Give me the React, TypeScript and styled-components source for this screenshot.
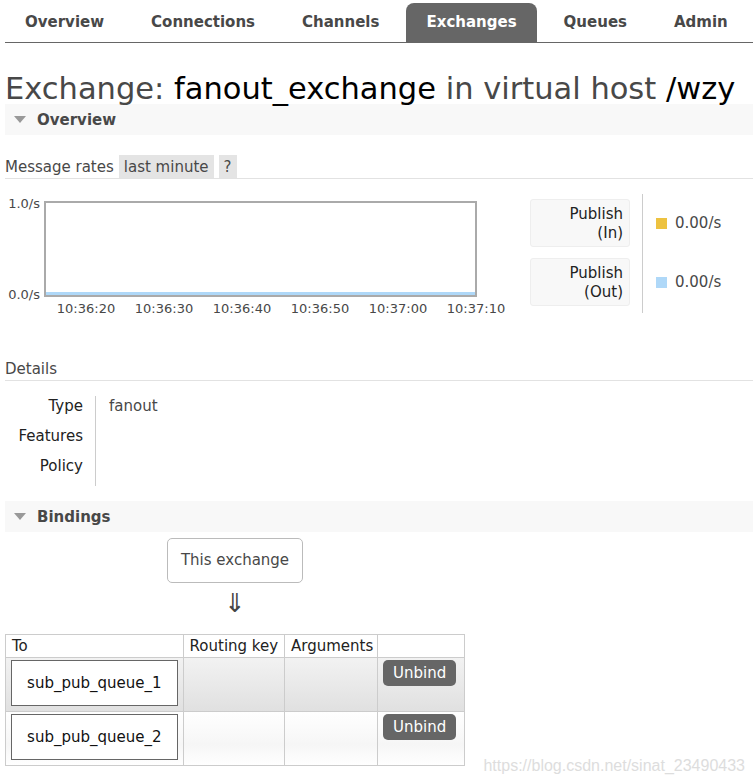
import React from "react";
import styled, { createGlobalStyle } from "styled-components";

const GlobalStyle = createGlobalStyle`
  body {
    margin: 0;
    background: #fff;
    color: #484848;
    font-family: "DejaVu Sans", Verdana, sans-serif;
    font-size: 15px;
  }
`;

const Page = styled.div`
  position: relative;
  padding-left: 5px;
  height: 783px;
  overflow: hidden;
`;

const Nav = styled.ul`
  display: flex;
  list-style: none;
  margin: 0;
  padding: 3px 0 0 0;
  border-bottom: 1px solid #666;
`;

const Tab = styled.li<{ $active?: boolean }>`
  height: 39px;
  line-height: 39px;
  padding: 0 20px;
  margin-right: 7px;
  border-radius: 8px 8px 0 0;
  font-weight: bold;
  font-size: 15px;
  color: ${(p) => (p.$active ? "#fff" : "#484848")};
  background: ${(p) => (p.$active ? "#666" : "transparent")};
`;

const Title = styled.h1`
  margin: 30px 0 0 0;
  font-size: 30.5px;
  line-height: 31px;
  font-weight: normal;
  color: #484848;
  white-space: nowrap;
`;

const Strong = styled.span`
  color: #000;
`;

const SectionHeader = styled.div`
  display: flex;
  align-items: center;
  height: 31px;
  padding-left: 9px;
  background: #f8f8f8;
  font-weight: bold;
  color: #484848;
`;

const Triangle = styled.span`
  width: 0;
  height: 0;
  margin-right: 11px;
  border-left: 6px solid transparent;
  border-right: 6px solid transparent;
  border-top: 7px solid #999;
`;

const RatesBar = styled.div`
  display: flex;
  align-items: flex-end;
  margin-top: 20px;
  border-bottom: 1px solid #e2e2e2;
  color: #484848;
`;

const RatesLabel = styled.span`
  line-height: 21px;
  margin-right: 5px;
`;

const Chip = styled.span`
  display: inline-block;
  height: 23px;
  line-height: 24px;
  padding: 0 5px;
  margin-right: 5px;
  background: #e4e4e4;
  color: #484848;
`;

const ChartSection = styled.div`
  display: flex;
  align-items: flex-start;
  margin-top: 15px;
`;

const ChartBlock = styled.div`
  display: flex;
  flex-direction: column;
`;

const ChartRow = styled.div`
  display: flex;
  align-items: flex-start;
`;

const YAxis = styled.div`
  display: flex;
  flex-direction: column;
  justify-content: space-between;
  align-items: flex-end;
  width: 35px;
  height: 107px;
  margin-top: 2px;
  padding-right: 4px;
  font-size: 13px;
  line-height: 16px;
  color: #484848;
`;

const Plot = styled.div`
  display: flex;
  flex-direction: column;
  justify-content: flex-end;
  box-sizing: border-box;
  width: 433px;
  height: 96px;
  margin-top: 7px;
  border: 2px solid #aaa;
  background: #fff;
`;

const Series = styled.div`
  height: 3px;
  background: #afd8f8;
`;

const TimeAxis = styled.div`
  display: flex;
  margin: -2px 0 0 42px;
  font-size: 13px;
  line-height: 15px;
  color: #484848;
`;

const Tick = styled.span`
  width: 78px;
  text-align: center;
`;

const Legend = styled.div`
  display: flex;
  margin-left: 15px;
`;

const LegendLabels = styled.div`
  display: flex;
  flex-direction: column;
  gap: 11px;
  padding-top: 5px;
`;

const LegendBox = styled.div`
  box-sizing: border-box;
  width: 100px;
  height: 48px;
  padding: 5px 6px 0 0;
  border: 1px solid #eee;
  border-radius: 3px;
  background: #f8f8f8;
  text-align: right;
  line-height: 19px;
  color: #222;
`;

const LegendValues = styled.div`
  display: flex;
  flex-direction: column;
  gap: 11px;
  margin-left: 12px;
  padding: 5px 0 7px 13px;
  border-left: 1px solid #ccc;
`;

const LegendValue = styled.div`
  display: flex;
  align-items: center;
  height: 48px;
  color: #484848;
`;

const Swatch = styled.span<{ $color: string }>`
  width: 11px;
  height: 11px;
  margin-right: 8px;
  background: ${(p) => p.$color};
`;

const SubHeading = styled.div`
  margin-top: 43px;
  padding-bottom: 1px;
  border-bottom: 1px solid #e2e2e2;
  line-height: 20px;
  color: #484848;
`;

const DetailsGrid = styled.div`
  display: flex;
  margin-top: 15px;
`;

const DetailKeys = styled.div`
  width: 78px;
  padding-right: 12px;
  border-right: 1px solid #ccc;
  text-align: right;
  color: #222;
`;

const DetailValues = styled.div`
  padding-left: 13px;
  color: #484848;
`;

const DetailCell = styled.div`
  height: 30px;
  line-height: 20px;
`;

const BindingsHeader = styled(SectionHeader)`
  margin-top: 15px;
`;

const BindingsArea = styled.div`
  width: 460px;
  display: flex;
  flex-direction: column;
  align-items: center;
`;

const ExchangeBox = styled.div`
  box-sizing: border-box;
  height: 45px;
  line-height: 43px;
  margin-top: 6px;
  padding: 0 13px;
  border: 1px solid #bbb;
  border-radius: 5px;
  color: #484848;
`;

const Arrow = styled.div`
  height: 30px;
  margin-top: 5px;
  font-size: 26px;
  line-height: 30px;
  color: #444;
`;

const Table = styled.table`
  width: 460px;
  margin-top: 16px;
  border-collapse: collapse;
  border: 1px solid #ccc;
  color: #222;
`;

const Th = styled.th<{ $w: number }>`
  width: ${(p) => p.$w}px;
  height: 22px;
  padding: 0 0 0 6px;
  border: 1px solid #ccc;
  text-align: left;
  font-weight: normal;
  line-height: 22px;
`;

const Row = styled.tr<{ $alt?: boolean }>`
  background: ${(p) =>
    p.$alt
      ? "linear-gradient(#fff, #f6f6f6 60%, #fff)"
      : "linear-gradient(#f2f2f2, #e0e0e0)"};
`;

const Td = styled.td`
  padding: 2px 5px 5px 5px;
  border: 1px solid #ccc;
  vertical-align: top;
`;

const QueueLink = styled.div`
  box-sizing: border-box;
  height: 46px;
  line-height: 44px;
  border: 1px solid #666;
  background: #fff;
  text-align: center;
  color: #111;
`;

const UnbindButton = styled.button`
  height: 26px;
  padding: 0 10px;
  border: none;
  border-radius: 5px;
  background: #666;
  color: #fff;
  font-family: inherit;
  font-size: 15px;
`;

const Watermark = styled.div`
  position: absolute;
  right: 8px;
  bottom: 8px;
  font-family: "Liberation Sans", Arial, sans-serif;
  font-size: 16px;
  color: #ddd;
`;

const tabs = ["Overview", "Connections", "Channels", "Exchanges", "Queues", "Admin"];
const ticks = ["10:36:20", "10:36:30", "10:36:40", "10:36:50", "10:37:00", "10:37:10"];
const queues = ["sub_pub_queue_1", "sub_pub_queue_2"];

export default function App() {
  return (
    <>
      <GlobalStyle />
      <Page>
        <Nav>
          {tabs.map((t) => (
            <Tab key={t} $active={t === "Exchanges"}>
              {t}
            </Tab>
          ))}
        </Nav>

        <Title>
          Exchange: <Strong>fanout_exchange</Strong> in virtual host <Strong>/wzy</Strong>
        </Title>

        <SectionHeader>
          <Triangle />
          Overview
        </SectionHeader>

        <RatesBar>
          <RatesLabel>Message rates</RatesLabel>
          <Chip>last minute</Chip>
          <Chip>?</Chip>
        </RatesBar>

        <ChartSection>
          <ChartBlock>
            <ChartRow>
              <YAxis>
                <span>1.0/s</span>
                <span>0.0/s</span>
              </YAxis>
              <Plot>
                <Series />
              </Plot>
            </ChartRow>
            <TimeAxis>
              {ticks.map((t) => (
                <Tick key={t}>{t}</Tick>
              ))}
            </TimeAxis>
          </ChartBlock>
          <Legend>
            <LegendLabels>
              <LegendBox>
                Publish
                <br />
                (In)
              </LegendBox>
              <LegendBox>
                Publish
                <br />
                (Out)
              </LegendBox>
            </LegendLabels>
            <LegendValues>
              <LegendValue>
                <Swatch $color="#edc240" />
                0.00/s
              </LegendValue>
              <LegendValue>
                <Swatch $color="#afd8f8" />
                0.00/s
              </LegendValue>
            </LegendValues>
          </Legend>
        </ChartSection>

        <SubHeading>Details</SubHeading>
        <DetailsGrid>
          <DetailKeys>
            <DetailCell>Type</DetailCell>
            <DetailCell>Features</DetailCell>
            <DetailCell>Policy</DetailCell>
          </DetailKeys>
          <DetailValues>
            <DetailCell>fanout</DetailCell>
          </DetailValues>
        </DetailsGrid>

        <BindingsHeader>
          <Triangle />
          Bindings
        </BindingsHeader>

        <BindingsArea>
          <ExchangeBox>This exchange</ExchangeBox>
          <Arrow>⇓</Arrow>
        </BindingsArea>

        <Table>
          <thead>
            <tr>
              <Th $w={171}>To</Th>
              <Th $w={95}>Routing key</Th>
              <Th $w={86}>Arguments</Th>
              <Th $w={80}></Th>
            </tr>
          </thead>
          <tbody>
            {queues.map((q, i) => (
              <Row key={q} $alt={i % 2 === 1}>
                <Td>
                  <QueueLink>{q}</QueueLink>
                </Td>
                <Td />
                <Td />
                <Td>
                  <UnbindButton>Unbind</UnbindButton>
                </Td>
              </Row>
            ))}
          </tbody>
        </Table>

        <Watermark>https://blog.csdn.net/sinat_23490433</Watermark>
      </Page>
    </>
  );
}
